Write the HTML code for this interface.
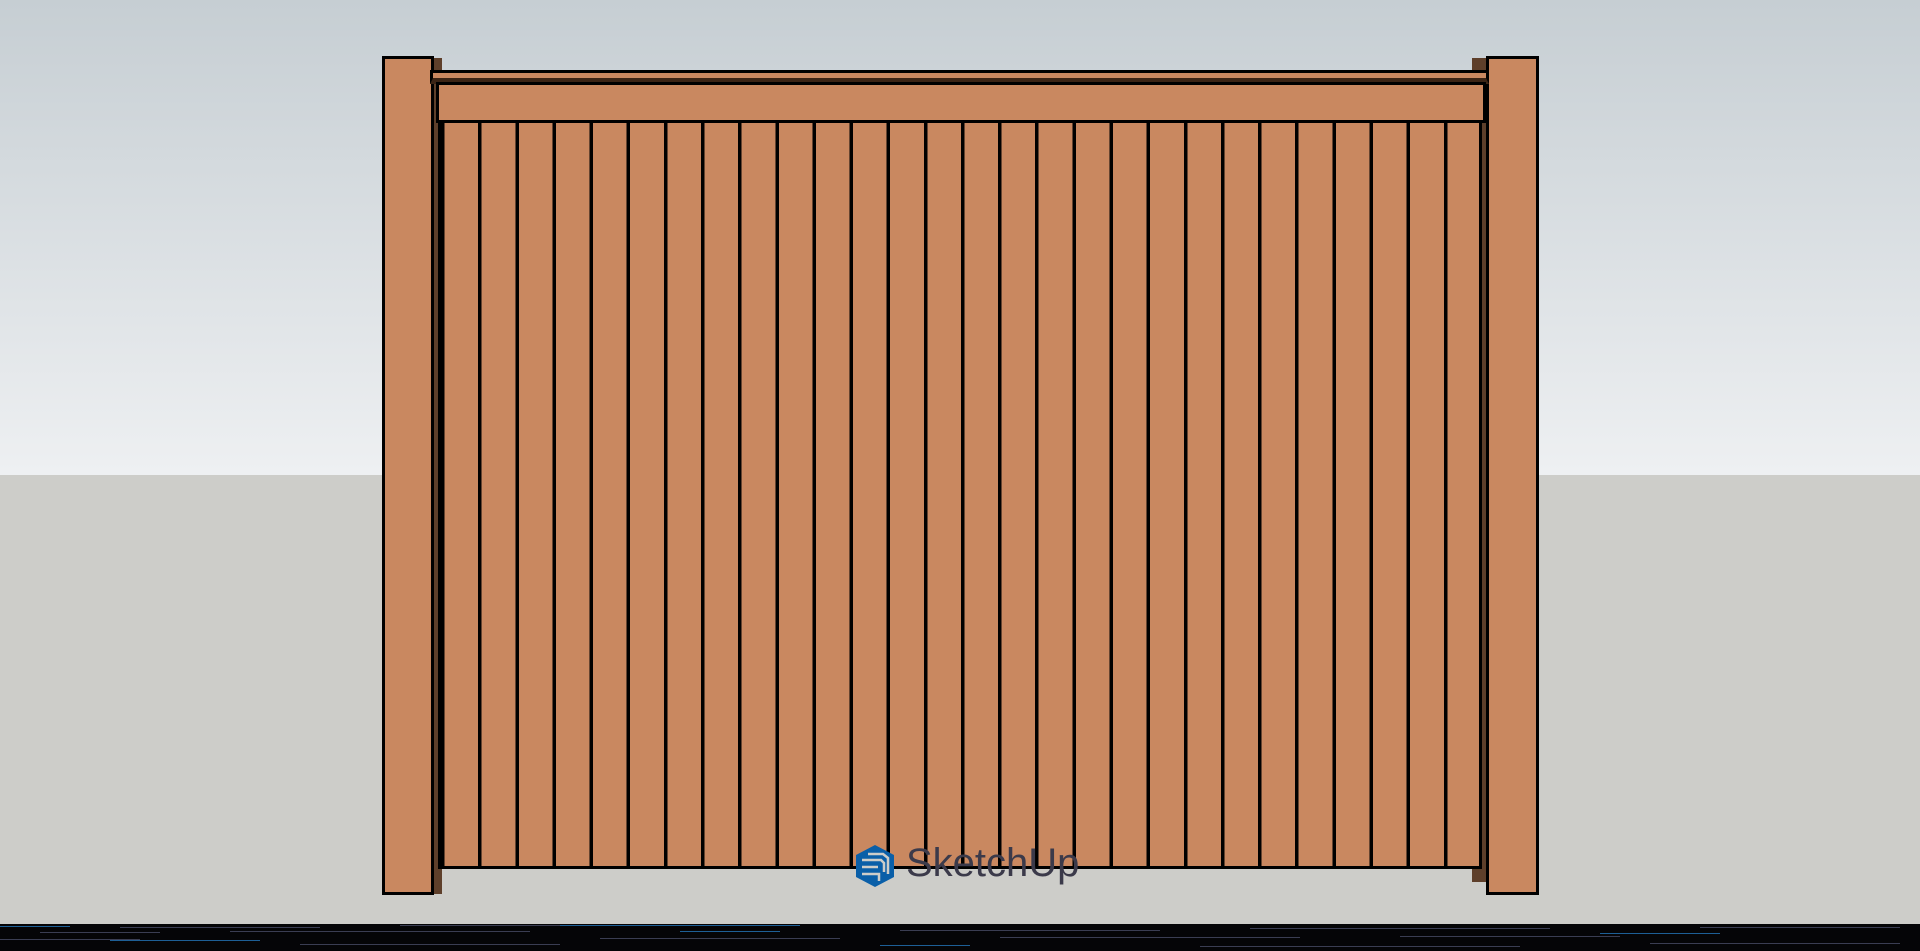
<!DOCTYPE html>
<html><head><style>
html,body{margin:0;padding:0;width:1920px;height:951px;overflow:hidden;position:relative;font-family:"Liberation Sans",sans-serif}
.sky{position:absolute;left:0;top:0;width:1920px;height:475px;background:linear-gradient(#c6ced3,#eef0f2)}
.ground{position:absolute;left:0;top:475px;width:1920px;height:449px;background:#cdcdc9}
.bot{position:absolute;left:0;top:924px;width:1920px;height:27px;background:#050507}
.ln{position:absolute;height:1px;background:#3a3d52}
.ln.b{background:#1d5f96}
.wood{background:#c98860;border:3px solid #000;box-sizing:border-box;position:absolute}
.dark{position:absolute;background:#5e3f2a}
.pk{position:absolute;left:438px;top:120px;width:1044px;height:749px;border:3px solid #000;box-sizing:border-box;
background:repeating-linear-gradient(90deg,#000 0 3.5px,#c98860 3.5px 37.14px)}
</style></head><body>
<div class="sky"></div><div class="ground"></div>
<div class="bot">
<div class="ln b" style="left:0;top:2px;width:70px"></div>
<div class="ln" style="left:120px;top:3px;width:200px"></div>
<div class="ln" style="left:400px;top:1px;width:180px"></div>
<div class="ln b" style="left:560px;top:1px;width:240px"></div>
<div class="ln" style="left:40px;top:8px;width:120px"></div>
<div class="ln" style="left:230px;top:7px;width:300px"></div>
<div class="ln b" style="left:680px;top:7px;width:100px"></div>
<div class="ln" style="left:900px;top:6px;width:260px"></div>
<div class="ln" style="left:1250px;top:4px;width:300px"></div>
<div class="ln b" style="left:1600px;top:9px;width:120px"></div>
<div class="ln" style="left:1400px;top:12px;width:220px"></div>
<div class="ln" style="left:0;top:15px;width:140px"></div>
<div class="ln b" style="left:110px;top:16px;width:150px"></div>
<div class="ln" style="left:600px;top:14px;width:240px"></div>
<div class="ln" style="left:1000px;top:13px;width:300px"></div>
<div class="ln" style="left:1700px;top:3px;width:200px"></div>
<div class="ln" style="left:300px;top:20px;width:260px"></div>
<div class="ln b" style="left:880px;top:21px;width:90px"></div>
<div class="ln" style="left:1200px;top:22px;width:320px"></div>
<div class="ln" style="left:1650px;top:19px;width:250px"></div>
</div>
<div class="dark" style="left:430px;top:58px;width:12px;height:836px"></div>
<div class="dark" style="left:1472px;top:58px;width:16px;height:824px"></div>
<div class="pk"></div>
<div class="wood" style="left:382px;top:56px;width:52px;height:839px"></div>
<div class="wood" style="left:1486px;top:56px;width:53px;height:839px"></div>
<div class="wood" style="left:430px;top:70px;width:1059px;height:14px;border-bottom:6px solid #3b2415"></div>
<div class="wood" style="left:436px;top:82px;width:1050px;height:41px"></div>
<svg style="position:absolute;left:852px;top:843px" width="46" height="46" viewBox="0 0 46 46">
<path d="M23 2 L42 12 L42 34 L23 44 L4 34 L4 12 Z" fill="#0a5fa8"/>
<path d="M16 11 L31 11 L36 15 L36 31 M10 17 L29 17 L32 20 L32 29 M10 24 L26 24 M10 31 L27 31 L27 38" stroke="#cdcdc9" stroke-width="2.5" fill="none"/>
</svg>
<div style="position:absolute;left:906px;top:841px;font-size:40px;color:#3b3a4a">SketchUp</div>
</body></html>
